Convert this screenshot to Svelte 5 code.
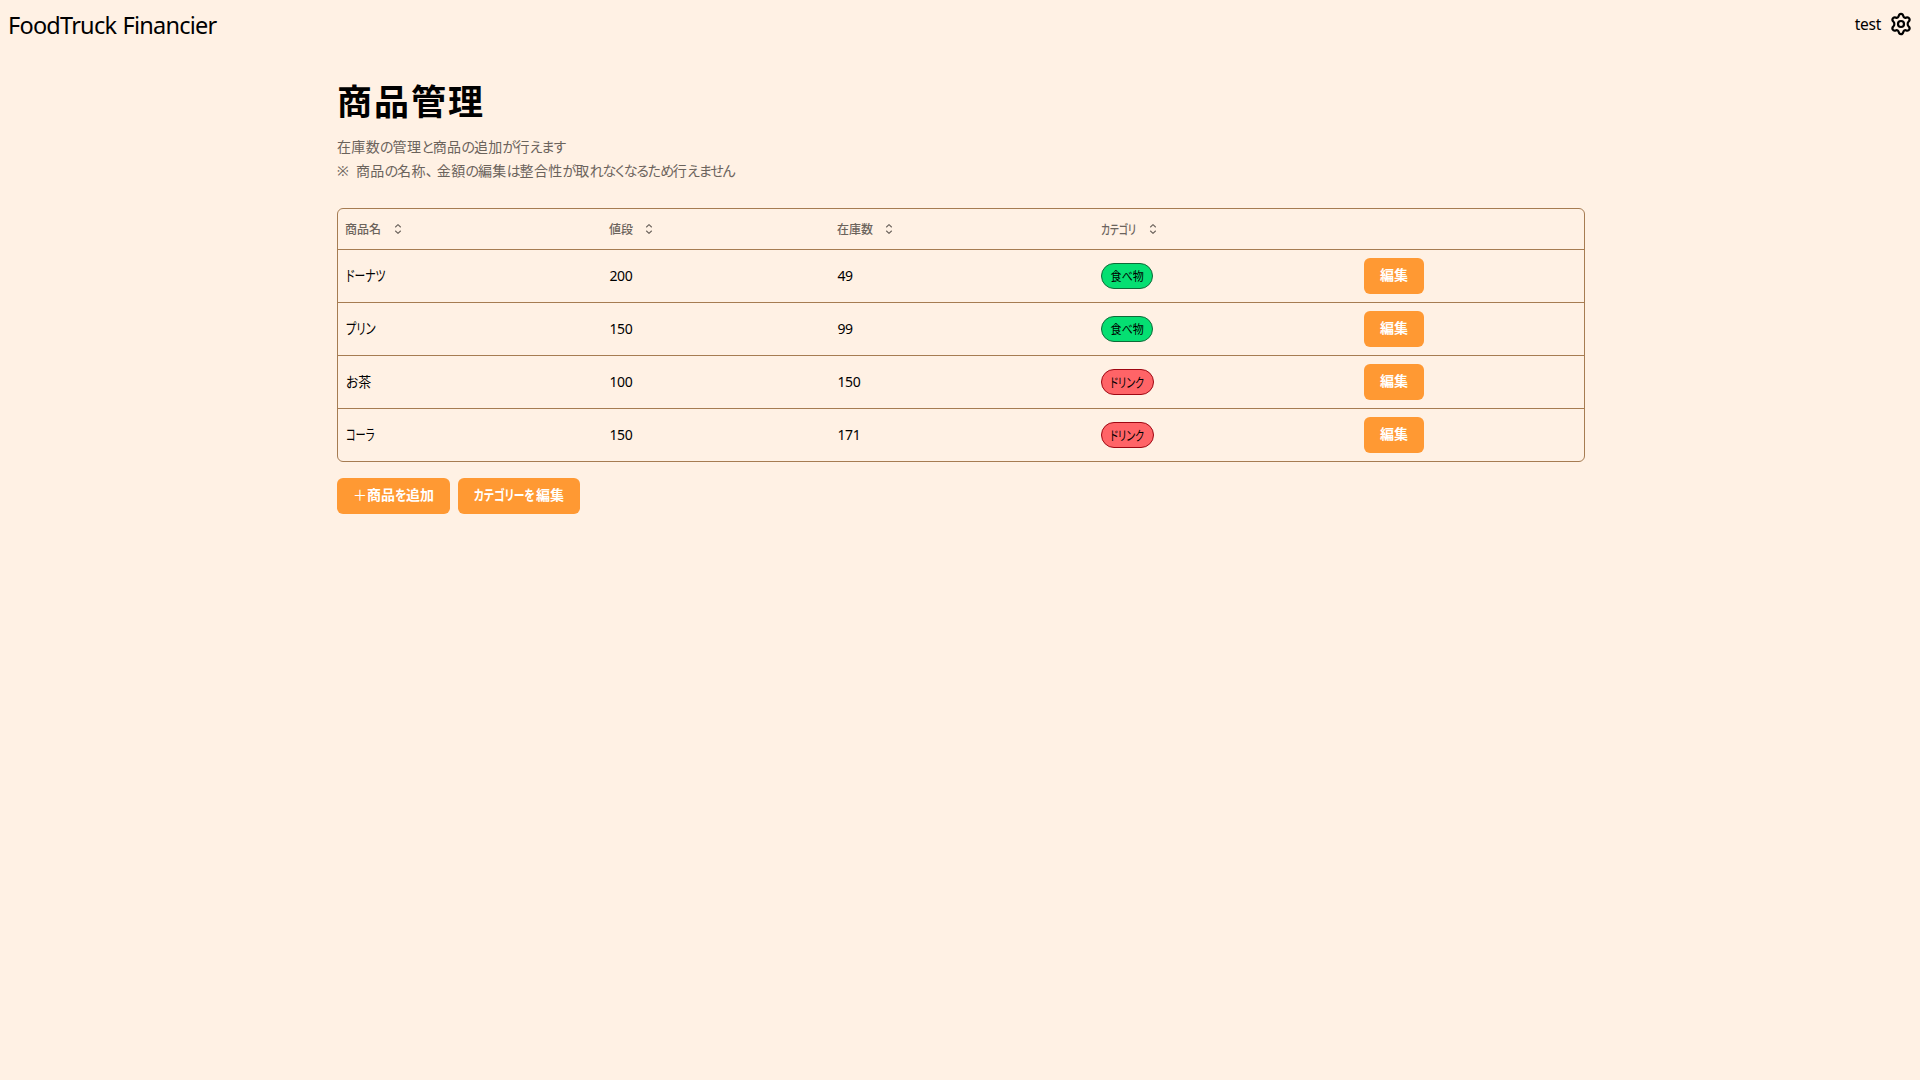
<script lang="ts">
  type Product = { name: string; kind: string; price: number; stock: number; category: 'food' | 'drink' };

  const columns = [
    { label: '商品名', kind: 'kanji' },
    { label: '値段', kind: 'kanji' },
    { label: '在庫数', kind: 'kanji' },
    { label: 'カテゴリ', kind: 'kana' }
  ];

  const products: Product[] = [
    { name: 'ドーナツ', kind: 'donut', price: 200, stock: 49, category: 'food' },
    { name: 'プリン', kind: 'pudding', price: 150, stock: 99, category: 'food' },
    { name: 'お茶', kind: 'tea', price: 100, stock: 150, category: 'drink' },
    { name: 'コーラ', kind: 'cola', price: 150, stock: 171, category: 'drink' }
  ];

  const categoryNames = { food: '食べ物', drink: 'ドリンク' };

  // Kana is set tighter than kanji, so each sentence is split into runs of one script.
  const runs = (text: string) => text.match(/[ぁ-ん]+|、|[^ぁ-ん、]+/g) ?? [];
  const isKana = (text: string) => /^[ぁ-ん]/.test(text);
</script>

<header>
  <div class="brand">FoodTruck Financier</div>
  <div class="account">
    <span class="user">test</span>
    <svg class="gear" viewBox="0 0 24 24" aria-hidden="true">
      <path d="M9.7 4.1C10.1 2.4 10.6 1.9 12 1.9s1.900.5 2.300 2.200c.3 1.400 1.500 2 2.800 1.500 1.700-.6 2.500-.3 3.200.9s.5 2-.8 3.200c-1.100 1-1.100 3.600 0 4.600 1.300 1.200 1.500 2 .8 3.200s-1.500 1.500-3.200.9c-1.300-.5-2.500.1-2.800 1.500-.4 1.700-.9 2.200-2.300 2.200s-1.900-.5-2.300-2.200c-.3-1.400-1.500-2-2.800-1.500-1.700.6-2.500.3-3.200-.9s-.5-2 .8-3.200c1.100-1 1.100-3.600 0-4.600-1.300-1.200-1.500-2-.8-3.200s1.500-1.500 3.200-.9c1.300.5 2.500-.1 2.800-1.500z" />
      <circle cx="12" cy="12" r="3" />
    </svg>
  </div>
</header>

<main>
  <h1>商品管理</h1>
  <div class="lead">
    <p class="first">{#each runs('在庫数の管理と商品の追加が行えます') as run}<span class:tight={isKana(run)}>{run}</span>{/each}</p>
    <p class="second"><span class="mark">※ </span>{#each runs('商品の名称、金額の編集は整合性が取れなくなるため行えません') as run}<span class:tight={isKana(run)} class:comma={run === '、'}>{run}</span>{/each}</p>
  </div>

  <div class="table">
    <div class="row head">
      {#each columns as col}
        <div class="cell">
          <span class="label {col.kind}">{col.label}</span>
          <svg class="sort" viewBox="0 0 8 12" aria-hidden="true">
            <path d="M1.500 4 4 1.700 6.500 4M1.500 8 4 10.300 6.500 8" />
          </svg>
        </div>
      {/each}
      <div class="cell"></div>
    </div>
    {#each products as p}
      <div class="row">
        <div class="cell"><span class="name {p.kind}">{p.name}</span></div>
        <div class="cell num">{p.price}</div>
        <div class="cell num">{p.stock}</div>
        <div class="cell"><span class="badge {p.category}"><span>{categoryNames[p.category]}</span></span></div>
        <div class="cell"><button class="edit">編集</button></div>
      </div>
    {/each}
  </div>

  <div class="actions">
    <button class="add"><span class="plus">＋</span><span>商品</span><span class="wo">を</span><span>追加</span></button>
    <button class="categories"><span class="condensed">カテゴリーを</span><span>編集</span></button>
  </div>
</main>

<style>
  :global(body) {
    background: #fff1e4;
    color: #000;
    font-family: 'Noto Sans', 'Noto Sans CJK JP', sans-serif;
  }

  header {
    display: flex;
    justify-content: space-between;
    align-items: center;
    height: 48px;
    padding: 0 7px 0 8px;
    box-sizing: border-box;
  }

  .brand {
    font-size: 23.5px;
    line-height: 32px;
    letter-spacing: -0.76px;
    word-spacing: 1px;
    white-space: nowrap;
    padding-top: 1px;
  }

  .account {
    display: flex;
    align-items: center;
    gap: 8px;
  }

  .user {
    font-size: 15.5px;
    line-height: 24px;
    letter-spacing: -0.3px;
  }

  svg {
    fill: none;
    stroke: currentColor;
    stroke-linecap: round;
    stroke-linejoin: round;
  }

  .gear {
    width: 24px;
    height: 24px;
    stroke-width: 2.2;
  }

  main {
    width: 1248px;
    margin-left: 337px;
    padding-top: 32px;
    font-feature-settings: 'palt';
  }

  h1 {
    margin: 0;
    font-size: 35px;
    line-height: 44px;
    font-weight: 700;
    letter-spacing: 2px;
  }

  .lead {
    margin-top: 11px;
    padding-bottom: 25px;
    color: #6b635c;
    font-size: 14px;
    line-height: 24px;
    letter-spacing: 0.35px;
  }

  p {
    margin: 0;
    white-space: nowrap;
  }

  .first .tight {
    letter-spacing: -0.95px;
  }

  .second .tight {
    letter-spacing: -1.1px;
  }

  .comma {
    letter-spacing: 4px;
  }

  .mark {
    display: inline-block;
    width: 19px;
  }

  .table {
    border: 1px solid #a67c52;
    border-radius: 6px;
  }

  .row {
    display: grid;
    grid-template-columns: 264px 228px 264px 263px 1fr;
    height: 52px;
    border-top: 1px solid #a67c52;
  }

  .row.head {
    height: 40px;
    border-top: 0;
    color: #6b635c;
  }

  .cell {
    display: flex;
    align-items: center;
    padding-left: 7px;
    white-space: nowrap;
    font-size: 14px;
  }

  .head .cell {
    font-size: 12px;
    font-weight: 500;
    gap: 13px;
  }

  .head .cell:nth-child(n + 2) {
    gap: 12px;
  }

  .label.kana {
    width: 36px;
    margin-top: -2px;
    font-size: 13px;
    transform: scaleX(0.75);
    transform-origin: left;
  }

  .name {
    transform-origin: left;
    margin: -3px 0 0 1px;
    font-size: 15px;
  }

  .donut {
    transform: scaleX(0.72);
  }

  .pudding {
    transform: scaleX(0.75);
  }

  .cola {
    transform: scaleX(0.68);
  }

  .tea {
    font-size: 14px;
    transform: scaleX(0.92);
  }

  .sort {
    width: 8px;
    height: 12px;
    stroke-width: 1.1;
  }

  .num {
    letter-spacing: -0.4px;
    padding-left: 7.5px;
    padding-bottom: 1px;
  }

  .badge {
    display: flex;
    align-items: center;
    justify-content: center;
    width: 52px;
    height: 26px;
    box-sizing: border-box;
    border: 1px solid #0d6b38;
    border-radius: 13px;
    background: #05df72;
    font-size: 12px;
  }

  .badge span {
    transform: scaleX(0.92);
  }

  .badge.drink {
    width: 53px;
    padding-bottom: 2px;
    border-color: #9f0712;
    background: #ff6467;
    font-size: 13px;
  }

  .badge.drink span {
    transform: scaleX(0.77);
  }

  button {
    display: flex;
    align-items: center;
    justify-content: center;
    height: 36px;
    padding: 0 0 4px;
    border: 0;
    border-radius: 6px;
    background: #ff9933;
    color: #fff;
    font-family: inherit;
    font-feature-settings: inherit;
    font-size: 14px;
    font-weight: 700;
    white-space: nowrap;
  }

  .edit {
    width: 60px;
  }

  .actions {
    display: flex;
    gap: 8px;
    margin-top: 16px;
  }

  .add {
    width: 113px;
  }

  .plus {
    font-weight: 400;
  }

  .wo {
    width: 11px;
    transform: scaleX(0.85);
    transform-origin: left;
  }

  .categories {
    width: 122px;
  }

  .condensed {
    width: 62px;
    transform: scaleX(0.77);
    transform-origin: left;
  }
</style>
